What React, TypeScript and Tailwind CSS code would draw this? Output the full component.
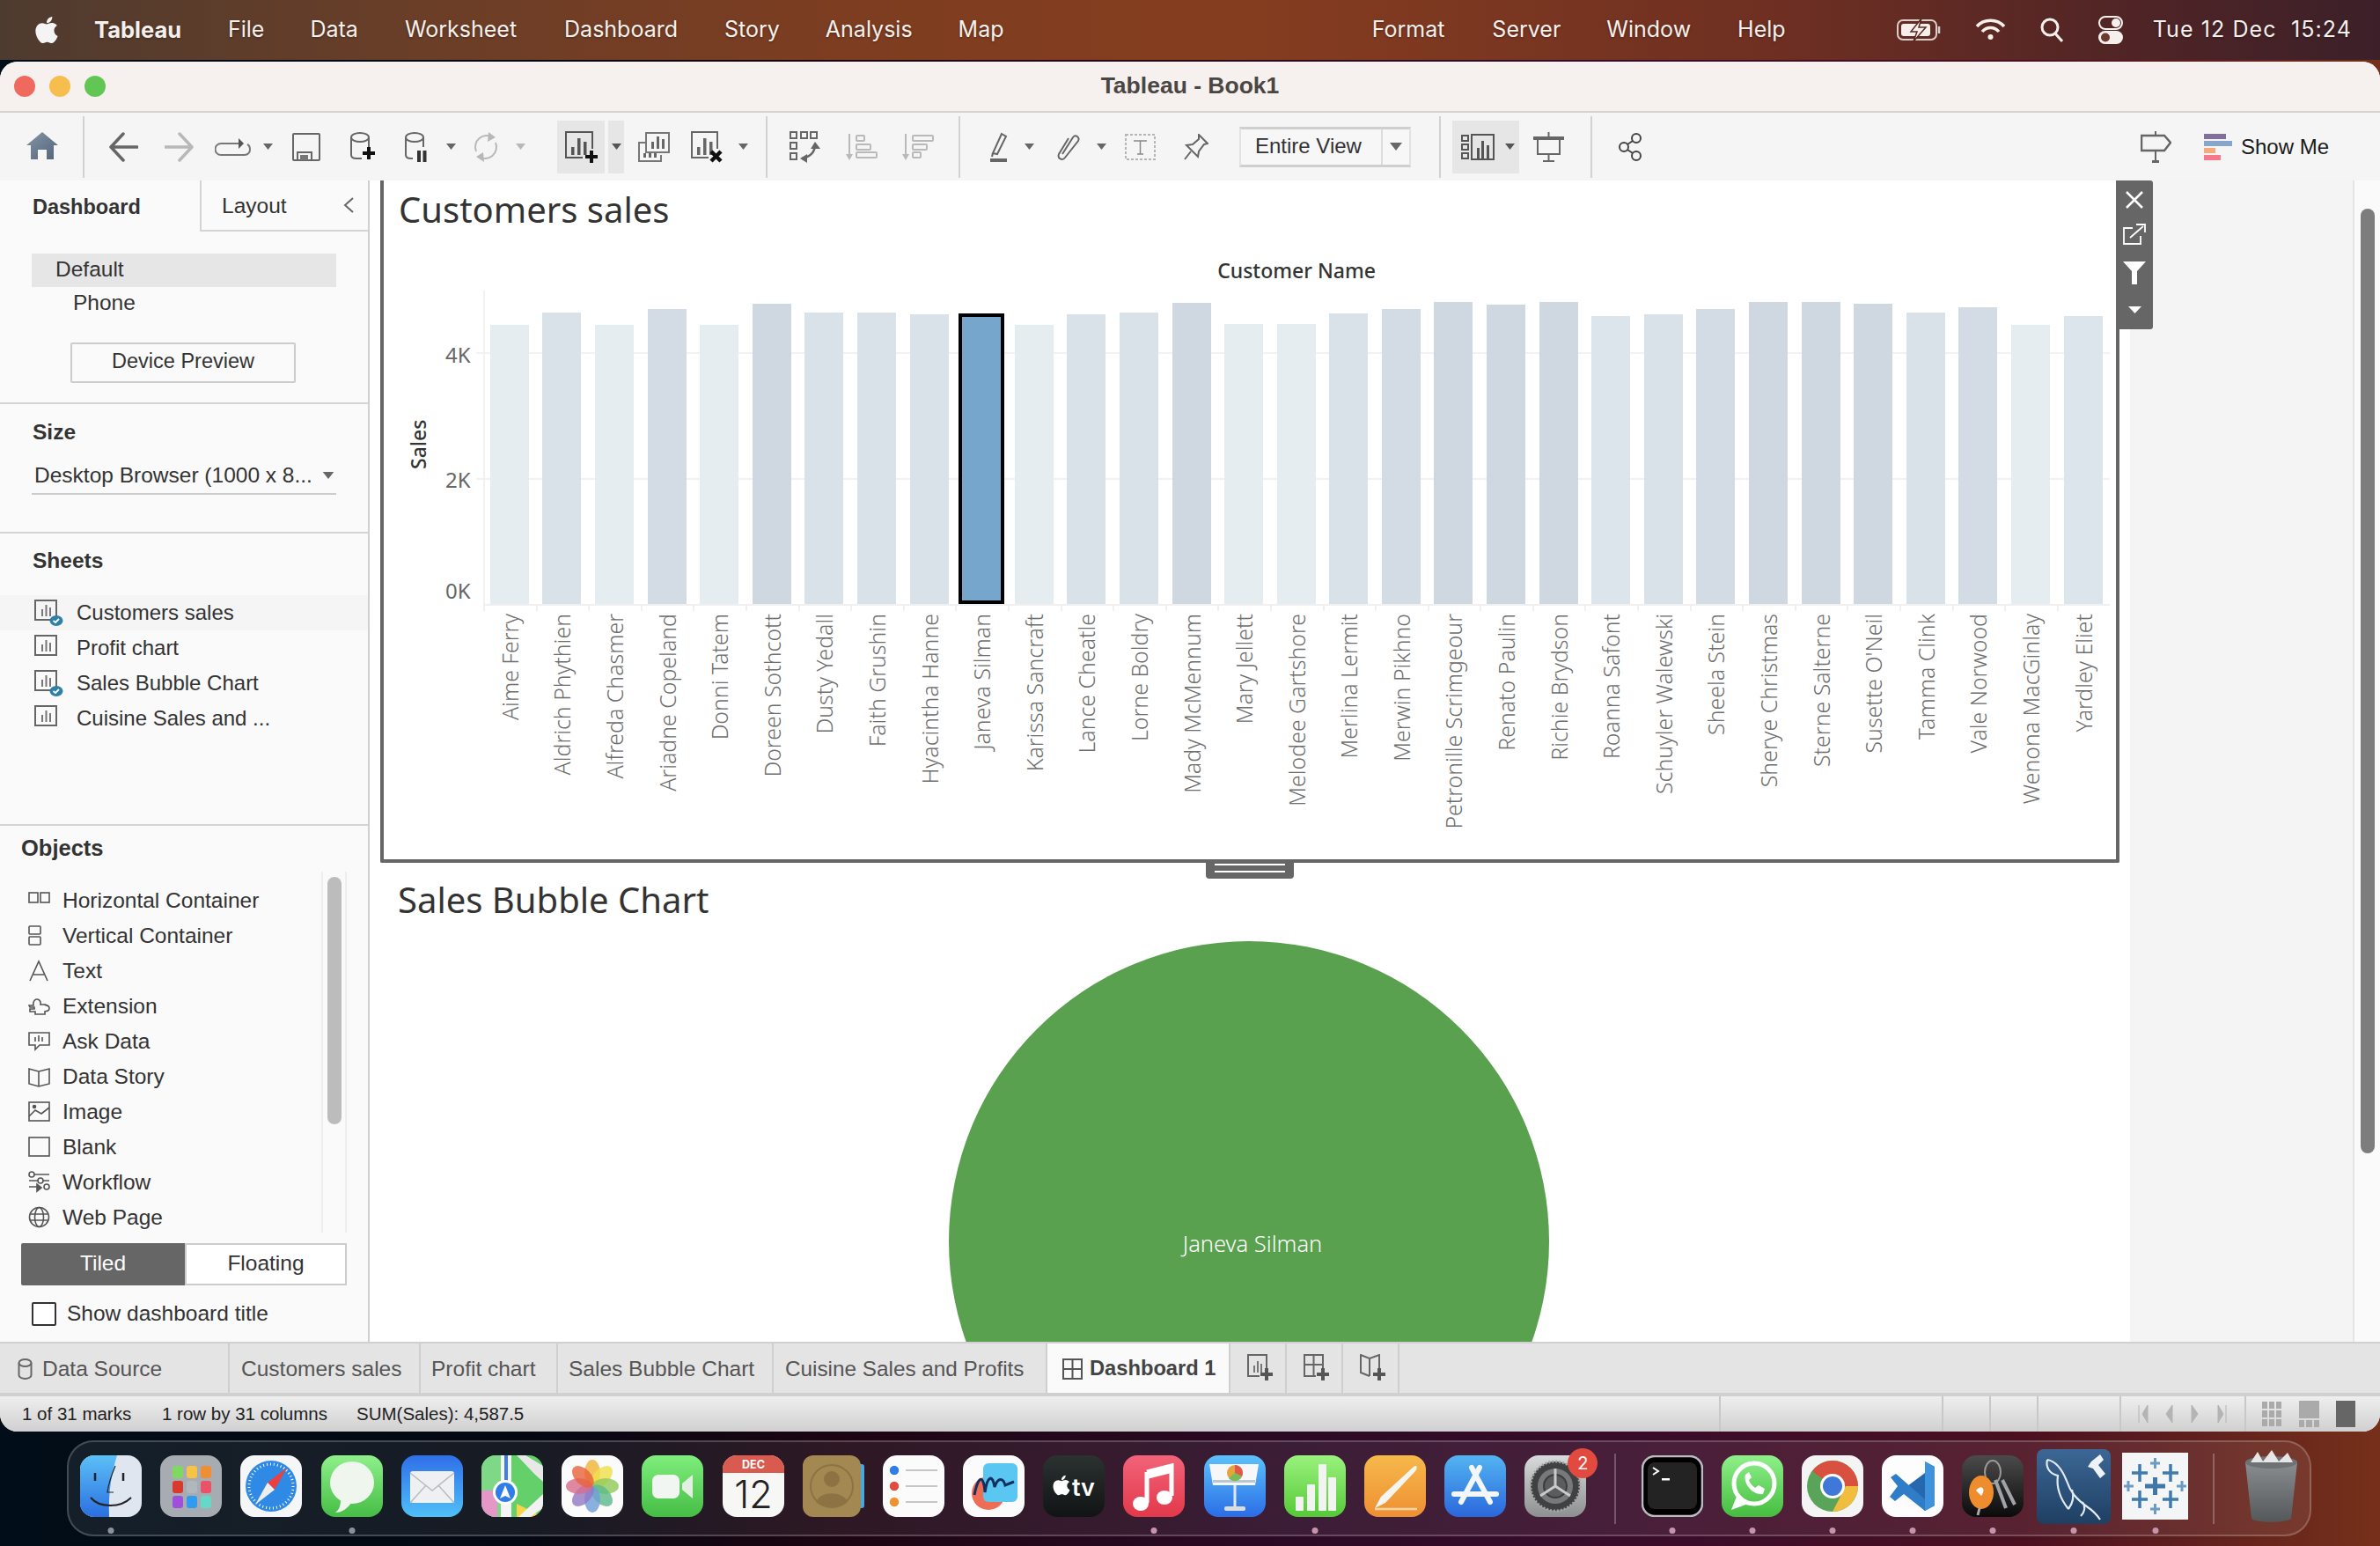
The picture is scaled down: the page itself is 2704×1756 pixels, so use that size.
import React from "react";

const sans = "font-['Liberation_Sans','Inter',sans-serif]";

const Caret = ({ cls, c = "#666" }: { cls: string; c?: string }) => (
  <svg width="11" height="7" viewBox="0 0 11 7" className={"shrink-0 " + cls}><path d="M0 0H11L5.5 7Z" fill={c} /></svg>
);
const Sep = ({ cls }: { cls: string }) => <div className={"w-[2px] h-[70px] bg-[#d2d2d2] shrink-0 " + cls} />;

const MiniChart = ({ c = "#666", off = 0 }: { c?: string; off?: number }) => (
  <g fill={c}>
    <rect x={7 + off} y="18" width="3.5" height="9" />
    <rect x={14 + off} y="8" width="3.5" height="19" />
    <rect x={21 + off} y="12" width="3.5" height="15" />
  </g>
);
const Plus = ({ x, y, c = "#111" }: { x: number; y: number; c?: string }) => (
  <path d={`M${x + 5} ${y}h4v5h5v4h-5v5h-4v-5h-5v-4h5z`} fill={c} />
);

function Toolbar() {
  return (
    <div className="h-[77px] bg-[#f5f5f5] flex items-center shrink-0">
      <svg width="36" height="32" viewBox="0 0 36 32" className="ml-[30px] shrink-0 mt-[-2px]">
        <defs><linearGradient id="hm" x1="0" y1="0" x2="1" y2="1"><stop offset="0" stopColor="#8795a6" /><stop offset="1" stopColor="#51647b" /></linearGradient></defs>
        <path d="M18 0L36 15H31V31H23V20H13V31H5V15H0Z" fill="url(#hm)" />
      </svg>
      <Sep cls="ml-[28px]" />
      <svg width="34" height="34" viewBox="0 0 34 34" className="ml-[27px] shrink-0" fill="none" stroke="#666" strokeWidth="3.5" strokeLinecap="round" strokeLinejoin="round"><path d="M33 17H3M17 2L3 17L17 32" /></svg>
      <svg width="34" height="34" viewBox="0 0 34 34" className="ml-[30px] shrink-0" fill="none" stroke="#b8b8b8" strokeWidth="3.5" strokeLinecap="round" strokeLinejoin="round"><path d="M1 17H31M17 2L31 17L17 32" /></svg>
      <svg width="41" height="20" viewBox="0 0 41 20" className="ml-[23px] shrink-0" fill="none"><path d="M28 6H7a6 6 0 0 0 0 13H34a6 6 0 0 0 6-6c0-3-1-5-3-6" stroke="#777" strokeWidth="2" /><path d="M27 0L33 6L27 12Z" fill="#555" /></svg>
      <Caret cls="ml-[14px]" />
      <svg width="32" height="32" viewBox="0 0 32 32" className="ml-[22px] shrink-0" fill="none"><rect x="1" y="1" width="30" height="30" rx="1" stroke="#666" strokeWidth="2" /><path d="M6 31V22H22V31" stroke="#666" strokeWidth="2" /><rect x="9" y="25" width="9" height="6" fill="#777" /></svg>
      <svg width="29" height="34" viewBox="0 0 29 34" className="ml-[34px] shrink-0" fill="none"><ellipse cx="11" cy="6" rx="10" ry="5" stroke="#666" strokeWidth="2" /><path d="M1 6V26c0 3 3 4 6 4H13M21 6V17" stroke="#666" strokeWidth="2" /><Plus x={14} y={17} /></svg>
      <svg width="25" height="34" viewBox="0 0 25 34" className="ml-[33px] shrink-0" fill="none"><ellipse cx="11" cy="6" rx="10" ry="5" stroke="#666" strokeWidth="2" /><path d="M1 6V26c0 3 3 4 6 4H9M21 6V17" stroke="#666" strokeWidth="2" /><rect x="14" y="21" width="4" height="13" fill="#333" /><rect x="20.5" y="21" width="4" height="13" fill="#333" /></svg>
      <Caret cls="ml-[22px]" />
      <svg width="36" height="34" viewBox="0 0 36 34" className="ml-[16px] shrink-0" fill="none" stroke="#b8b8b8" strokeWidth="2"><path d="M7 22A13 13 0 0 1 26 6M29 12A13 13 0 0 1 10 28" /><path d="M21 0L29 6L20 11Z M15 23L7 28L16 34Z" fill="#b8b8b8" stroke="none" /></svg>
      <Caret cls="ml-[16px]" c="#b8b8b8" />
      <div className="ml-[36px] w-[54px] h-[60px] bg-[#e6e6e6] flex items-center justify-center shrink-0">
        <svg width="37" height="36" viewBox="0 0 37 36" fill="none"><path d="M20 30H1V1H31V20" stroke="#555" strokeWidth="2" /><MiniChart c="#555" /><Plus x={23} y={22} /></svg>
      </div>
      <div className="ml-[4px] w-[18px] h-[60px] bg-[#e6e6e6] flex items-center justify-center shrink-0"><Caret cls="" c="#555" /></div>
      <svg width="36" height="34" viewBox="0 0 36 34" className="ml-[16px] shrink-0" fill="none"><path d="M9 12H1V33H26V26" stroke="#777" strokeWidth="2" /><rect x="9" y="1" width="26" height="22" stroke="#777" strokeWidth="2" fill="#f5f5f5" /><g fill="#666"><rect x="15" y="11" width="3" height="8" /><rect x="21" y="5" width="3" height="14" /><rect x="27" y="8" width="3" height="11" /><rect x="6" y="24" width="3" height="5" /><rect x="12" y="24" width="3" height="5" /><rect x="18" y="24" width="3" height="5" /></g></svg>
      <svg width="36" height="36" viewBox="0 0 36 36" className="ml-[24px] shrink-0" fill="none"><path d="M20 30H1V1H30V20" stroke="#666" strokeWidth="2" /><MiniChart c="#666" /><path d="M23 23L34 34M34 23L23 34" stroke="#111" strokeWidth="4.5" /></svg>
      <Caret cls="ml-[18px]" />
      <Sep cls="ml-[20px]" />
      <svg width="35" height="36" viewBox="0 0 35 36" className="ml-[25px] shrink-0" fill="none" stroke="#666" strokeWidth="2"><rect x="1" y="1" width="7" height="7" /><rect x="13" y="1" width="7" height="7" /><rect x="24" y="1" width="7" height="7" /><rect x="1" y="13" width="7" height="7" /><rect x="1" y="25" width="7" height="7" /><path d="M29 15c0 8-5 14-15 16" strokeWidth="2.5" /><path d="M29 12L35 20H24ZM12 31L20 26V36Z" fill="#666" stroke="none" /></svg>
      <svg width="36" height="30" viewBox="0 0 36 30" className="ml-[29px] shrink-0" fill="none" stroke="#b9b9b9" strokeWidth="2"><path d="M4 0V26" /><path d="M0 23H8L4 30Z" fill="#b9b9b9" stroke="none" /><rect x="12" y="2" width="9" height="6" rx="1" /><rect x="12" y="12" width="16" height="6" rx="1" /><rect x="12" y="21" width="23" height="6" rx="1" /></svg>
      <svg width="36" height="30" viewBox="0 0 36 30" className="ml-[28px] shrink-0" fill="none" stroke="#b9b9b9" strokeWidth="2"><path d="M4 0V26" /><path d="M0 23H8L4 30Z" fill="#b9b9b9" stroke="none" /><rect x="12" y="2" width="23" height="6" rx="1" /><rect x="12" y="12" width="16" height="6" rx="1" /><rect x="12" y="21" width="9" height="6" rx="1" /></svg>
      <Sep cls="ml-[28px]" />
      <svg width="20" height="34" viewBox="0 0 20 34" className="ml-[34px] shrink-0" fill="none"><path d="M13 2L18 5L8 25L3 24Z" stroke="#666" strokeWidth="2" /><path d="M3 24L2 28" stroke="#666" strokeWidth="2" /><rect x="0" y="30" width="19" height="4" fill="#666" /></svg>
      <Caret cls="ml-[19px]" />
      <svg width="30" height="32" viewBox="0 0 30 32" className="ml-[23px] shrink-0" fill="none" stroke="#666" strokeWidth="2"><path d="M9 24L21 5c3-4 8 0 6 4L12 28c-3 4-9 1-7-4L16 6" /></svg>
      <Caret cls="ml-[18px]" />
      <svg width="35" height="30" viewBox="0 0 35 30" className="ml-[21px] shrink-0" fill="none"><rect x="1" y="1" width="33" height="28" stroke="#b5b5b5" strokeWidth="2" strokeDasharray="3 2" /><path d="M10 8H25M17.5 8V23M14 23H21" stroke="#888" strokeWidth="1.5" /></svg>
      <svg width="28" height="30" viewBox="0 0 28 30" className="ml-[32px] shrink-0" fill="none" stroke="#666" strokeWidth="2"><path d="M17 1L27 11L23 12L17 20L16 26L3 13L10 12L17 6Z" /><path d="M8 20L1 29" /></svg>
      <div className={"ml-[35px] w-[195px] h-[46px] shrink-0 flex border-x-2 border-x-[#e2e2e2] border-y-[3px] border-y-[#cfcfcf] bg-[#f7f7f7] text-[#333] text-[24px] " + sans}>
        <div className="w-[159px] flex items-center pl-[16px] pb-[2px]">Entire View</div>
        <div className="flex-1 border-l-2 border-[#dcdcdc] flex items-center justify-center"><Caret cls="w-[14px] h-[9px]" /></div>
      </div>
      <Sep cls="ml-[32px]" />
      <div className="ml-[13px] w-[76px] h-[60px] bg-[#e6e6e6] flex items-center shrink-0">
        <svg width="38" height="30" viewBox="0 0 38 30" className="ml-[10px]" fill="none" stroke="#555" strokeWidth="2"><rect x="1" y="2" width="7" height="6" /><rect x="1" y="12" width="7" height="6" /><rect x="1" y="22" width="7" height="6" /><rect x="12" y="1" width="25" height="28" /><g fill="#555" stroke="none"><rect x="18" y="16" width="3" height="12" /><rect x="23" y="8" width="3" height="20" /><rect x="29" y="13" width="3" height="15" /></g></svg>
        <Caret cls="ml-[12px]" c="#555" />
      </div>
      <svg width="35" height="34" viewBox="0 0 35 34" className="ml-[16px] shrink-0" fill="none"><rect x="0" y="5" width="35" height="4" fill="#666" /><path d="M17.5 0V5M5 9V25H30V9M17.5 25V33M11 33H24" stroke="#666" strokeWidth="2" /></svg>
      <Sep cls="ml-[30px]" />
      <svg width="27" height="32" viewBox="0 0 27 32" className="ml-[30px] shrink-0" fill="none" stroke="#444" strokeWidth="2"><circle cx="20" cy="6" r="5" /><circle cx="20" cy="26" r="5" /><circle cx="6" cy="16" r="5" /><path d="M10 13L16 9M10 19L16 23" /></svg>
      <div className="flex-1" />
      <svg width="35" height="36" viewBox="0 0 35 36" className="shrink-0" fill="none"><path d="M17 0V5M17 22V34" stroke="#666" strokeWidth="2" /><path d="M1 5H27L34 13L27 22H1Z" stroke="#666" strokeWidth="2.5" /><rect x="13" y="33" width="8" height="3" fill="#666" /></svg>
      <div className="ml-[37px] w-[32px] flex flex-col gap-[2px] shrink-0">
        <div className="w-[25px] h-[6px] bg-[#83709a]" />
        <div className="w-[32px] h-[6px] bg-[#86a7cb]" />
        <div className="w-[13px] h-[6px] bg-[#f4aa7b]" />
        <div className="w-[19px] h-[6px] bg-[#f6788a]" />
      </div>
      <span className={"ml-[10px] mr-[58px] text-[24px] text-[#1a1a1a] w-[100px] whitespace-nowrap " + sans}>Show Me</span>
    </div>
  );
}

const SheetIcon = ({ check }: { check?: boolean }) => (
  <svg width="34" height="30" viewBox="0 0 34 30" className="shrink-0" fill="none">
    <rect x="1" y="1" width="24" height="22" stroke="#666" strokeWidth="2" />
    <g fill="#777"><rect x="8" y="11" width="2" height="8" /><rect x="12.5" y="6" width="2" height="13" /><rect x="17" y="9" width="2" height="10" /></g>
    {check && <g><ellipse cx="25" cy="24" rx="7.5" ry="6" fill="#2f7fa6" /><path d="M21.5 24l2.5 2 4-4" stroke="#fff" strokeWidth="1.8" /></g>}
  </svg>
);

const s = { stroke: "#555", strokeWidth: 1.6, fill: "none" };
const objects: [string, React.ReactNode][] = [
  ["Horizontal Container", <g {...s}><rect x="1" y="4" width="10" height="11" /><rect x="14" y="4" width="10" height="11" /></g>],
  ["Vertical Container", <g {...s}><rect x="1" y="2" width="13" height="9" rx="1" /><rect x="1" y="14" width="13" height="9" rx="1" /></g>],
  ["Text", <path d="M2 24L12 2L22 24M6 17H18" {...s} />],
  ["Extension", <path d="M1 12H6c-1-6 3-7 4-7s5 1 4 6h5c-1 1 5 0 5 4s-5 4-5 3v4H8v-3H2v-3h5v-2H2z" {...s} />],
  ["Ask Data", <g {...s}><path d="M1 3H24V17H13L8 22V17H1Z" /><path d="M8 8V13M12 6V13M16 8V13" /></g>],
  ["Data Story", <path d="M1 4L12 7L24 4V21L12 24L1 21ZM12 7V24" {...s} />],
  ["Image", <g {...s}><rect x="1" y="2" width="23" height="21" /><path d="M1 18L8 11L15 15L24 8" /><circle cx="7" cy="7" r="1.5" fill="#555" /></g>],
  ["Blank", <rect x="1" y="2" width="23" height="21" {...s} />],
  ["Workflow", <g {...s}><circle cx="4" cy="4" r="3" /><path d="M7 4H24M1 11H12M17 11H24M1 18H12" /><circle cx="14" cy="11" r="3" /><circle cx="21" cy="18" r="3" /><path d="M10 15L15 19L10 23Z" fill="#555" /></g>],
  ["Web Page", <g {...s}><circle cx="12.5" cy="12.5" r="11" /><ellipse cx="12.5" cy="12.5" rx="5" ry="11" /><path d="M2 9H23M2 16H23" /></g>],
];

function LeftPanel() {
  return (
    <div className={"w-[420px] shrink-0 bg-[#fafafa] border-r-2 border-[#d0d0d0] flex flex-col text-[#333] text-[24.5px] " + sans}>
      <div className="flex h-[58px] shrink-0">
        <div className="w-[227px] pl-[37px] pt-[13px] font-bold text-[23.5px]">Dashboard</div>
        <div className="flex-1 border-l-2 border-b-2 border-[#d4d4d4] flex items-center">
          <span className="ml-[23px] mt-[2px]">Layout</span>
          <svg width="12" height="18" viewBox="0 0 12 18" className="ml-[64px]" fill="none" stroke="#666" strokeWidth="2"><path d="M11 1L2 9L11 17" /></svg>
        </div>
      </div>
      <div className="h-[196px] shrink-0 border-b-2 border-[#d4d4d4] flex flex-col">
        <div className="ml-[36px] mr-[36px] mt-[25px] h-[38px] bg-[#e6e6e6] pl-[27px] flex items-center pb-[2px]">Default</div>
        <div className="ml-[83px] h-[38px] flex items-center pb-[1px]">Phone</div>
        <div className="ml-[80px] mt-[25px] w-[256px] h-[46px] border-2 border-[#ccc] rounded-[2px] flex items-center justify-center pb-[3px] text-[23.5px]">Device Preview</div>
      </div>
      <div className="h-[147px] shrink-0 border-b-2 border-[#d4d4d4] flex flex-col">
        <div className="ml-[37px] mt-[14px] font-bold">Size</div>
        <div className="ml-[36px] mr-[36px] mt-[14px] h-[38px] border-b-2 border-[#ccc] flex items-center pl-[3px] justify-between pb-[3px] text-[24.5px]">
          <span className="whitespace-nowrap">Desktop Browser (1000 x 8...</span>
          <Caret cls="mr-[2px] w-[14px] h-[8px]" />
        </div>
      </div>
      <div className="h-[332px] shrink-0 border-b-2 border-[#d4d4d4] flex flex-col">
        <div className="ml-[37px] mt-[13px] font-bold">Sheets</div>
        <div className="mt-[20px] flex flex-col text-[24px]">
          {[["Customers sales", true, true], ["Profit chart", false, false], ["Sales Bubble Chart", true, false], ["Cuisine Sales and ...", false, false]].map(([n, c, h]) => (
            <div key={n as string} className={"h-[40px] flex items-center pl-[39px] gap-[14px] " + (h ? "bg-[#f5f5f5]" : "")}>
              <SheetIcon check={c as boolean} />
              <span className="whitespace-nowrap">{n as string}</span>
            </div>
          ))}
        </div>
      </div>
      <div className="flex-1 relative flex flex-col">
        <div className="ml-[24px] mt-[6px] font-bold text-[25.5px]">Objects</div>
        <div className="mt-[8px] h-[410px] flex">
          <div className="w-[365px] flex flex-col pt-[13px]">
            {objects.map(([n, ic]) => (
              <div key={n} className="h-[40px] flex items-center pl-[32px] gap-[14px] shrink-0">
                <svg width="25" height="26" viewBox="0 0 25 26" className="shrink-0">{ic}</svg>
                <span className="whitespace-nowrap">{n}</span>
              </div>
            ))}
          </div>
          <div className="w-[29px] border-x-2 border-[#eee] pt-[6px] flex justify-center">
            <div className="w-[16px] h-[281px] rounded-full bg-[#bcbcbc]" />
          </div>
        </div>
        <div className="ml-[24px] mt-[12px] w-[370px] h-[48px] flex">
          <div className="w-[186px] bg-[#666] text-white flex items-center justify-center rounded-l-[2px] pb-[1px]">Tiled</div>
          <div className="flex-1 border-2 border-[#ccc] bg-white flex items-center justify-center pb-[1px]">Floating</div>
        </div>
        <div className="ml-[36px] mt-[14px] flex items-center gap-[12px]">
          <div className="w-[28px] h-[27px] border-2 border-[#333] rounded-[2px] bg-white" />
          <span>Show dashboard title</span>
        </div>
      </div>
    </div>
  );
}

const customers: [string, number][] = [
  ["Aime Ferry", 370], ["Aldrich Phythien", 356], ["Alfreda Chasmer", 370], ["Ariadne Copeland", 352], ["Donni Tatem", 370],
  ["Doreen Sothcott", 346], ["Dusty Yedall", 356], ["Faith Grushin", 356], ["Hyacintha Hanne", 358], ["Janeva Silman", 357],
  ["Karissa Sancraft", 370], ["Lance Cheatle", 358], ["Lorne Boldry", 356], ["Mady McMennum", 345], ["Mary Jellett", 369],
  ["Melodee Gartshore", 369], ["Merlina Lermit", 357], ["Merwin Pikhno", 352], ["Petronille Scrimgeour", 344], ["Renato Paulin", 347],
  ["Richie Brydson", 344], ["Roanna Safont", 360], ["Schuyler Walewski", 358], ["Sheela Stein", 352], ["Sherye Christmas", 344],
  ["Sterne Salterne", 344], ["Susette O'Neil", 346], ["Tamma Clink", 356], ["Vale Norwood", 350], ["Wenona MacGinlay", 370], ["Yardley Eliet", 360],
];
const barColor = (t: number) => (t <= 348 ? "bg-[#cfd7e1]" : t <= 353 ? "bg-[#d3dbe4]" : t <= 358 ? "bg-[#d9e1e9]" : t <= 362 ? "bg-[#dde5ec]" : "bg-[#e6edf0]");

function BarChart() {
  return (
    <div className="relative z-20 w-[1976px] h-[775px] shrink-0 border-x-4 border-b-4 border-[#666] flex flex-col font-['Noto_Sans',sans-serif] rounded-b-[2px]">
      <div className="h-[66px] pl-[17px] flex items-center text-[40px] text-[#333] shrink-0">Customers sales</div>
      <div className="h-[59px] shrink-0 pt-[20px] text-center text-[23px] font-medium text-[#333] pl-[106px] leading-[32px]">Customer Name</div>
      <div className="relative ml-[113px] w-[1848px] h-[358px] shrink-0 border-b-2 border-[#f0f0f0] flex items-end">
        <div className="absolute left-0 top-[0px] bottom-0 w-[2px] bg-[#f2f2f2]" />
        <div className="absolute left-[-8px] right-0 top-[70px] h-[2px] bg-[#f2f2f2]" />
        <div className="absolute left-[-8px] right-0 top-[213px] h-[2px] bg-[#f2f2f2]" />
        <div className="absolute left-[-43px] top-[58px] text-[24px] leading-[30px] text-[#666]">4K</div>
        <div className="absolute left-[-43px] top-[200px] text-[24px] leading-[30px] text-[#666]">2K</div>
        <div className="absolute left-[-43px] top-[326px] text-[24px] leading-[30px] text-[#666]">0K</div>
        <div className="absolute left-[-88px] top-[133px] h-[84px] text-[23px] leading-[28px] font-medium text-[#333] [writing-mode:vertical-rl] rotate-180 text-center">Sales</div>
        {customers.map(([n, t]) => (
          <div key={n} className="relative w-[59.6px] shrink-0 flex justify-center">
            {n === "Janeva Silman" ? (
              <div className="w-[52px] border-4 border-black bg-[#76a6cc]" style={{ height: 687 - t }} />
            ) : (
              <div className={"w-[44px] " + barColor(t)} style={{ height: 687 - t }} />
            )}
          </div>
        ))}
      </div>
      <div className="ml-[113px] w-[1848px] h-[6px] flex shrink-0">
        {customers.map(([n]) => <div key={n} className="w-[59.6px] shrink-0 border-l-2 border-[#f0f0f0]" />)}
      </div>
      <div className="ml-[113px] w-[1848px] mt-[3px] flex">
        {customers.map(([n]) => (
          <div key={n} className="w-[59.6px] shrink-0 flex justify-center">
            <span className="self-start [writing-mode:vertical-rl] rotate-180 text-[24.9px] font-light text-[#6e6e6e] leading-[28px] whitespace-nowrap">{n}</span>
          </div>
        ))}
      </div>
      <div className="absolute left-[1968px] top-0 w-[42px] h-[169px] bg-[#666] rounded-r-[3px] rounded-bl-[3px] flex flex-col items-center text-white">
        <svg width="22" height="22" viewBox="0 0 22 22" className="mt-[11px] shrink-0" fill="none" stroke="#fff" strokeWidth="2.5"><path d="M2 2L20 20M20 2L2 20" /></svg>
        <svg width="26" height="24" viewBox="0 0 26 24" className="mt-[16px] shrink-0" fill="none" stroke="#fff" strokeWidth="1.8"><path d="M11 5H1V23H20V14" /><path d="M8 16L23 3M15 1H25V10" /></svg>
        <svg width="26" height="26" viewBox="0 0 26 26" className="mt-[19px] shrink-0"><path d="M0 0H26L16 11V26H10V11Z" fill="#fff" /></svg>
        <svg width="15" height="8" viewBox="0 0 15 8" className="mt-[25px] shrink-0"><path d="M0 0H15L7.5 8Z" fill="#fff" /></svg>
      </div>
      <div className="absolute left-[934px] top-[771px] w-[100px] h-[22px] bg-[#666] rounded-b-[4px] flex flex-col items-center gap-[6px] pt-[5px] z-10">
        <div className="w-[80px] h-[2px] bg-white" />
        <div className="w-[80px] h-[2px] bg-white" />
      </div>
    </div>
  );
}

function Canvas() {
  return (
    <div className="w-[2000px] shrink-0 bg-white flex flex-col">
      <div className="pl-[12px]"><BarChart /></div>
      <div className="h-[84px] pl-[32px] flex items-center text-[40px] text-[#333] font-['Noto_Sans',sans-serif] shrink-0">Sales Bubble Chart</div>
      <div className="flex-1 min-h-0 overflow-hidden">
        <div className="ml-[658px] mt-[5px] w-[682px] h-[682px] rounded-full bg-[#59a14f] flex items-center justify-center text-white text-[25.5px] font-light font-['Noto_Sans',sans-serif] pl-[8px] pt-[5px]">Janeva Silman</div>
      </div>
    </div>
  );
}

function Tabs() {
  const tab = "h-full border-r-2 border-[#cfcfcf] flex items-center shrink-0 text-[#555] whitespace-nowrap";
  return (
    <div className={"h-[62px] shrink-0 bg-[#e4e4e4] border-t-2 border-b-[4px] border-[#d0d0d0] flex text-[24.5px] " + sans}>
      <div className={tab + " w-[261px] pl-[20px] gap-[11px] pt-[2px]"}>
        <svg width="17" height="24" viewBox="0 0 17 24" fill="none" stroke="#666" strokeWidth="2"><ellipse cx="8.5" cy="5" rx="7" ry="4" /><path d="M1.5 5V19c0 2 3 4 7 4s7-2 7-4V5" /></svg>
        Data Source
      </div>
      <div className={tab + " w-[217px] pl-[13px] pt-[2px]"}>Customers sales</div>
      <div className={tab + " w-[156px] pl-[12px] pt-[2px]"}>Profit chart</div>
      <div className={tab + " w-[245px] pl-[12px] pt-[2px]"}>Sales Bubble Chart</div>
      <div className={tab + " w-[311px] pl-[13px] pt-[2px] text-[24.3px]"}>Cuisine Sales and Profits</div>
      <div className="h-full w-[208px] bg-[#fafafa] border-r-2 border-[#cfcfcf] flex items-center pl-[17px] pt-[2px] gap-[8px] font-bold text-[#444] shrink-0 text-[23.7px]">
        <svg width="23" height="24" viewBox="0 0 23 24" fill="none" stroke="#555" strokeWidth="2"><rect x="1" y="1" width="21" height="22" /><path d="M11.5 1V23M1 12H22" /></svg>
        Dashboard 1
      </div>
      <div className={tab + " w-[64px] justify-center pl-[6px]"}>
        <svg width="30" height="32" viewBox="0 0 30 32" fill="none"><path d="M14 25H1V1H22V16" stroke="#666" strokeWidth="2" /><g fill="#777"><rect x="7" y="13" width="2" height="8" /><rect x="11" y="8" width="2" height="13" /><rect x="15" y="11" width="2" height="10" /></g><Plus x={15} y={16} c="#555" /></svg>
      </div>
      <div className={tab + " w-[64px] justify-center pl-[6px]"}>
        <svg width="30" height="32" viewBox="0 0 30 32" fill="none"><path d="M14 25H1V1H22V16M11.5 1V25M1 12H22" stroke="#666" strokeWidth="2" /><Plus x={15} y={16} c="#555" /></svg>
      </div>
      <div className={tab + " w-[64px] justify-center pl-[6px]"}>
        <svg width="30" height="32" viewBox="0 0 30 32" fill="none"><path d="M11 25L1 21V1L11 5L22 1V16M11 5V25" stroke="#666" strokeWidth="2" /><Plus x={15} y={16} c="#555" /></svg>
      </div>
    </div>
  );
}

function StatusBar() {
  const cell = "h-full border-l-2 border-[#c8c8c8] shrink-0";
  return (
    <div className={"h-[40px] shrink-0 bg-gradient-to-b from-[#efefef] to-[#d0d0d0] flex items-center text-[20.5px] text-[#222] " + sans}>
      <span className="ml-[25px] w-[159px] whitespace-nowrap">1 of 31 marks</span>
      <span className="w-[221px] whitespace-nowrap">1 row by 31 columns</span>
      <span className="w-[1548px] whitespace-nowrap">SUM(Sales): 4,587.5</span>
      <div className={cell + " w-[253px]"} />
      <div className={cell + " w-[54px]"} />
      <div className={cell + " w-[54px]"} />
      <div className={cell + " w-[94px]"} />
      <div className={cell + " w-[142px] flex items-center pl-[18px] gap-[17px]"}>
        {["M2 2V22M12 2L6 12L12 22Z", "M10 2L3 12L10 22Z", "M2 2L9 12L2 22Z", "M2 2L8 12L2 22ZM11 2V22"].map((d) => (
          <svg key={d} width="13" height="24" viewBox="0 0 13 24" fill="#b4b4b4" stroke="#b4b4b4" strokeWidth="1"><path d={d} /></svg>
        ))}
      </div>
      <div className={cell + " flex-1 flex items-center pl-[18px]"}>
        <div className="grid grid-cols-3 gap-[2px] w-[22px]">{Array.from({ length: 9 }).map((_, i) => <div key={i} className="h-[8px] bg-[#aaa]" />)}</div>
        <div className="ml-[20px] w-[23px] flex flex-col gap-[2px]">
          <div className="h-[20px] bg-[#aaa]" />
          <div className="grid grid-cols-3 gap-[2px]">{[0, 1, 2].map((i) => <div key={i} className="h-[8px] bg-[#aaa]" />)}</div>
        </div>
        <div className="ml-[19px] w-[22px] h-[30px] bg-[#666]" />
      </div>
    </div>
  );
}

const appleD = "M17.05 20.28c-.98.95-2.05.8-3.08.35-1.09-.46-2.09-.48-3.24 0-1.44.62-2.2.44-3.06-.35C2.79 15.25 3.51 7.59 9.05 7.31c1.35.07 2.29.74 3.08.8 1.18-.24 2.31-.93 3.57-.84 1.51.12 2.65.72 3.4 1.8-3.12 1.87-2.38 5.98.48 7.13-.57 1.5-1.31 2.99-2.54 4.09zM12.03 7.25c-.15-2.23 1.66-4.07 3.74-4.25.29 2.58-2.34 4.5-3.74 4.25z";

const G = ({ id, a, b }: { id: string; a: string; b: string }) => (
  <defs><linearGradient id={id} x1="0" y1="0" x2="0" y2="1"><stop offset="0" stopColor={a} /><stop offset="1" stopColor={b} /></linearGradient></defs>
);
const Base = ({ fill }: { fill: string }) => <rect x="0" y="0" width="70" height="70" rx="16" fill={fill} />;
const Ic = ({ children }: { children: React.ReactNode }) => <svg width="70" height="70" viewBox="0 0 70 70">{children}</svg>;

const dockApps: { k: string; cell: string; dot?: boolean; node: React.ReactNode }[] = [
  { k: "finder", cell: "w-[70px] mr-[21.2px]", dot: true, node: <Ic><clipPath id="fc"><rect width="70" height="70" rx="16" /></clipPath><g clipPath="url(#fc)"><G id="f1" a="#5cc0f7" b="#2a6fe0" /><rect width="70" height="70" fill="#dfe6f0" /><path d="M0 0H42C36 20 32 40 33 70H0Z" fill="url(#f1)" /></g><path d="M17 20V29M49 20V29" stroke="#222" strokeWidth="2.5" /><path d="M12 48C22 60 46 60 58 48" stroke="#222" strokeWidth="2" fill="none" /><path d="M40 12C35 24 32 34 31 42H38" stroke="#222" strokeWidth="1.2" fill="none" /></Ic> },
  { k: "launch", cell: "w-[70px] mr-[21.2px]", node: <Ic><Base fill="#a7abb2" />{[["#7fd860", "#f6c344", "#ef8f34"], ["#d83a2e", "#b0b8bd", "#e8536a"], ["#a04fdc", "#2f9cf0", "#66d8c8"]].map((row, r) => row.map((c, i) => <rect key={c} x={14 + i * 16} y={12 + r * 17} width="12" height="14" rx="3" fill={c} />))}</Ic> },
  { k: "safari", cell: "w-[70px] mr-[21.2px]", node: <Ic><Base fill="#f5f6f8" /><circle cx="35" cy="35" r="29" fill="#2f8ae6" /><circle cx="35" cy="35" r="25" fill="none" stroke="#fff" strokeWidth="3" strokeDasharray="1 3" /><path d="M53 14L39 39L31 31Z" fill="#ee3f3f" /><path d="M17 56L31 31L39 39Z" fill="#eee" /></Ic> },
  { k: "msg", cell: "w-[70px] mr-[21.2px]", dot: true, node: <Ic><G id="m1" a="#8ff08a" b="#45bd45" /><Base fill="url(#m1)" /><ellipse cx="35" cy="31" rx="25" ry="24" fill="#eef6ee" /><path d="M22 50C22 58 20 62 16 65C24 65 30 60 34 54Z" fill="#eef6ee" /></Ic> },
  { k: "mail", cell: "w-[70px] mr-[21.2px]", node: <Ic><G id="ma" a="#2f6fe8" b="#4fc0f8" /><Base fill="url(#ma)" /><rect x="10" y="18" width="50" height="36" rx="3" fill="#eef0f2" /><path d="M10 20L35 40L60 20M10 54L28 34M60 54L42 34" stroke="#b8bcc2" strokeWidth="1.5" fill="none" /></Ic> },
  { k: "maps", cell: "w-[70px] mr-[21.2px]", node: <Ic><clipPath id="mc"><rect width="70" height="70" rx="16" /></clipPath><g clipPath="url(#mc)"><rect width="70" height="70" fill="#63d06a" /><path d="M0 0H22V70H0Z" fill="#7fd887" /><path d="M0 40H18V70H0Z" fill="#e597c8" /><path d="M40 55L70 70H40Z" fill="#f7d54a" /><path d="M22 0H34V70H22Z" fill="#f5f5f5" /><path d="M40 0C50 10 60 22 70 30V12L50 0Z" fill="#e8e8e8" /><path d="M26 0H30V32H26Z" fill="#3f7de8" /><path d="M42 70L70 44V60L55 70Z" fill="#f2f2f2" /></g><circle cx="27" cy="42" r="14" fill="#fff" /><circle cx="27" cy="42" r="11" fill="#2f7de8" /><path d="M27 34L33 49L27 46L21 49Z" fill="#fff" /></Ic> },
  { k: "photos", cell: "w-[70px] mr-[21.2px]", node: <Ic><Base fill="#fbfbfb" />{["#f3b33a", "#f0e04b", "#8fca56", "#5cb88c", "#6e9ed8", "#9277c4", "#d86b8c", "#e8613b"].map((c, i) => <ellipse key={c} cx="35" cy="20" rx="9" ry="15" fill={c} opacity="0.8" transform={`rotate(${i * 45} 35 35)`} />)}</Ic> },
  { k: "ft", cell: "w-[70px] mr-[21.2px]", node: <Ic><G id="ft1" a="#7fee7c" b="#45bd45" /><Base fill="url(#ft1)" /><rect x="12" y="22" width="31" height="27" rx="7" fill="#f2f6f2" /><path d="M46 32L58 22V49L46 39Z" fill="#e3efe3" /></Ic> },
  { k: "cal", cell: "w-[70px] mr-[21.2px]", node: <Ic><Base fill="#f7f7f5" /><path d="M0 16A16 16 0 0 1 16 0H54A16 16 0 0 1 70 16V20H0Z" fill="#d95a4f" /><text x="35" y="15" textAnchor="middle" fontSize="12.5" fontWeight="700" fill="#fff" fontFamily="Inter">DEC</text><text x="35" y="60" textAnchor="middle" fontSize="43" fontWeight="300" fill="#222" fontFamily="Inter">12</text></Ic> },
  { k: "contacts", cell: "w-[70px] mr-[21.2px]", node: <Ic><rect x="62" y="10" width="8" height="50" rx="3" fill="#4aa6dd" /><rect x="0" y="0" width="66" height="70" rx="12" fill="#a48852" /><circle cx="33" cy="35" r="24" fill="none" stroke="#8d7343" strokeWidth="2" /><circle cx="33" cy="27" r="9" fill="#8d7343" /><path d="M15 53C20 40 46 40 51 53C44 60 22 60 15 53Z" fill="#8d7343" /></Ic> },
  { k: "rem", cell: "w-[70px] mr-[21.2px]", node: <Ic><Base fill="#fbfbfb" /><circle cx="13" cy="17" r="6" fill="#2f7de8" stroke="#fff" strokeWidth="1.5" /><circle cx="13" cy="35" r="6" fill="#e34c3c" stroke="#fff" strokeWidth="1.5" /><circle cx="13" cy="53" r="6" fill="#ee9132" stroke="#fff" strokeWidth="1.5" /><path d="M26 17H62M26 35H62M26 53H62" stroke="#b5b5b5" strokeWidth="1.5" /></Ic> },
  { k: "free", cell: "w-[70px] mr-[21.2px]", node: <Ic><Base fill="#fbfbfb" /><circle cx="29" cy="43" r="19" fill="#ee6e55" /><rect x="23" y="9" width="39" height="44" rx="6" fill="#5ac6f2" /><path d="M13 45C18 20 24 24 25 42C28 22 34 22 36 36C40 24 46 26 48 34L58 30" stroke="#12305e" strokeWidth="3" fill="none" /></Ic> },
  { k: "tv", cell: "w-[70px] mr-[21.2px]", node: <Ic><G id="t1" a="#2b3230" b="#101414" /><Base fill="url(#t1)" /><g transform="translate(6 19) scale(1.25)" fill="#fff"><path d={appleD} /></g><text x="33" y="46" fontSize="27" fontWeight="600" fill="#fff" fontFamily="Inter">tv</text></Ic> },
  { k: "music", cell: "w-[70px] mr-[21.2px]", dot: true, node: <Ic><G id="mu" a="#f2637a" b="#e2394a" /><Base fill="url(#mu)" /><path d="M27 19L55 12V46" stroke="#fff" strokeWidth="5" fill="none" /><path d="M27 19V54" stroke="#fff" strokeWidth="5" /><ellipse cx="20" cy="55" rx="9" ry="8" fill="#fff" /><ellipse cx="47" cy="48" rx="9" ry="8" fill="#fff" /><path d="M27 17L55 10V20L27 27Z" fill="#fff" /></Ic> },
  { k: "key", cell: "w-[70px] mr-[21.2px]", node: <Ic><G id="k1" a="#5cc2fb" b="#2a6de6" /><Base fill="url(#k1)" /><path d="M6 10H62L58 34H10Z" fill="#f7f7f7" /><rect x="10" y="28" width="48" height="3" fill="#b9c6d4" /><circle cx="35" cy="20" r="9" fill="#e8a33d" /><path d="M35 20V11A9 9 0 0 1 43 24Z" fill="#e2574c" /><path d="M35 20L43 24A9 9 0 0 1 28 26Z" fill="#79bb57" /><path d="M35 34V60" stroke="#e3e7ea" strokeWidth="3" /><rect x="23" y="58" width="24" height="5" rx="2" fill="#d8dde2" /></Ic> },
  { k: "num", cell: "w-[70px] mr-[21.2px]", dot: true, node: <Ic><G id="n1" a="#9af27c" b="#55c938" /><Base fill="url(#n1)" /><g fill="#f2f4f2"><rect x="13" y="47" width="9" height="16" rx="1" /><rect x="26" y="33" width="9" height="30" rx="1" /><rect x="39" y="10" width="9" height="53" rx="1" /><rect x="50" y="25" width="9" height="38" rx="1" /></g></Ic> },
  { k: "pages", cell: "w-[70px] mr-[21.2px]", node: <Ic><G id="p1" a="#f6b94a" b="#ef8f33" /><Base fill="url(#p1)" /><path d="M56 13C60 10 61 14 58 18L24 54L12 60L19 47Z" fill="#f7f5f0" /><path d="M12 61H60" stroke="#f7d7a6" strokeWidth="2.5" /></Ic> },
  { k: "store", cell: "w-[70px] mr-[21.2px]", node: <Ic><G id="a1" a="#53b4f2" b="#2a67db" /><Base fill="url(#a1)" /><g stroke="#f3f7fb" strokeWidth="6" strokeLinecap="round"><path d="M31 14L52 53M40 14L19 53" /><path d="M11 44H59" /></g></Ic> },
  { k: "settings", cell: "w-[70px]", node: <Ic><G id="s1" a="#d8dadb" b="#8d8f90" /><Base fill="url(#s1)" /><circle cx="35" cy="35" r="28" fill="#3f4142" /><circle cx="35" cy="35" r="28" fill="none" stroke="#a3a5a6" strokeWidth="3" strokeDasharray="2 2" /><circle cx="35" cy="35" r="20" fill="#77797a" /><circle cx="35" cy="35" r="13" fill="#5a5c5d" stroke="#3a3c3d" strokeWidth="2" /><path d="M35 35V15M35 35L18 46M35 35L52 46" stroke="#c8cacb" strokeWidth="3" /></Ic> },
  { k: "sep1", cell: "ml-[32px] mr-[29px]", node: null },
  { k: "term", cell: "w-[70px] mr-[21px]", dot: true, node: <Ic><rect x="1" y="1" width="68" height="68" rx="14" fill="#000" stroke="#b9bcc0" strokeWidth="2.5" /><rect x="7" y="8" width="56" height="53" rx="8" fill="#232323" /><path d="M13 14L19 18L13 22" stroke="#fff" strokeWidth="2" fill="none" /><rect x="23" y="26" width="9" height="2.5" fill="#fff" /></Ic> },
  { k: "wa", cell: "w-[70px] mr-[21px]", dot: true, node: <Ic><G id="w1" a="#8ff08a" b="#45bd40" /><Base fill="url(#w1)" /><circle cx="37" cy="32" r="23" fill="none" stroke="#fff" strokeWidth="5" /><path d="M18 44L11 62L30 55Z" fill="#fff" /><path d="M27 22C24 32 36 46 47 44L49 38L42 34L38 37C34 34 32 31 31 28L34 25L31 19Z" fill="#fff" /></Ic> },
  { k: "chrome", cell: "w-[70px] mr-[21px]", dot: true, node: <Ic><Base fill="#f4f4f4" /><circle cx="35" cy="35" r="29" fill="#5aa45a" /><path d="M35 6A29 29 0 0 1 64 35H35L12 18A29 29 0 0 1 35 6Z" fill="#d95040" /><path d="M64 35A29 29 0 0 1 35 64L50 35Z" fill="#f1bd3e" /><circle cx="35" cy="35" r="14" fill="#fff" /><circle cx="35" cy="35" r="11" fill="#3f78d8" /></Ic> },
  { k: "vs", cell: "w-[70px] mr-[21px]", dot: true, node: <Ic><Base fill="#fdfdfd" /><path d="M49 7L60 13V57L49 63L25 38L49 20Z" fill="#2668b0" /><path d="M49 7L60 13V57L49 63Z" fill="#3f93dc" /><path d="M10 25L16 21L49 50V63L25 44L15 52L9 47L18 35Z" fill="#2f7cc7" /></Ic> },
  { k: "keychain", cell: "w-[70px]", dot: true, node: <Ic><G id="kc" a="#4b4b4b" b="#0b0b0b" /><Base fill="url(#kc)" /><ellipse cx="35" cy="19" rx="9" ry="13" fill="none" stroke="#9a9a9a" strokeWidth="2" /><path d="M38 28L50 60M46 28L60 56" stroke="#9ea4a8" strokeWidth="4" /><ellipse cx="22" cy="42" rx="14" ry="19" fill="#ee8c2e" /><path d="M16 40C22 32 28 38 22 46Z" fill="#fff" /><path d="M20 60L18 68" stroke="#aaa" strokeWidth="3" /></Ic> },
  { k: "mysql", cell: "w-[84px] ml-[15px]", dot: true, node: <svg width="84" height="85" viewBox="0 0 84 85" className="shrink-0"><G id="my" a="#3c6795" b="#1f3f62" /><rect width="84" height="85" rx="8" fill="url(#my)" /><path d="M12 12C24 14 30 26 34 36C38 48 44 56 58 66C64 70 68 74 72 80M12 12C10 20 14 28 24 30C22 44 28 58 36 68M36 68C42 60 42 52 40 46M52 60C56 66 54 72 50 76" stroke="#e2ebf3" strokeWidth="2.2" fill="none" /><path d="M62 14L72 6L76 12L70 18L78 28L72 33L64 22L58 20Z" fill="#eef3f8" /></svg> },
  { k: "tableau", cell: "w-[75px] ml-[13px]", dot: true, node: <svg width="75" height="76" viewBox="0 0 75 76" className="shrink-0"><rect width="75" height="76" fill="#f3f5f6" /><g fill="none" strokeWidth="3"><path d="M37.5 28V48M26 38H49" stroke="#4177a8" strokeWidth="5" /><path d="M37.5 6V18M32 12H43M37.5 58V70M32 64H43" stroke="#6f9bc2" /><path d="M20 13V33M11 23H29M55 13V33M46 23H64M20 43V63M11 53H29M55 43V63M46 53H64" stroke="#3f7bae" strokeWidth="3.5" /><path d="M7 32V44M2 38H13M68 32V44M62 38H73" stroke="#6f9bc2" /></g></svg> },
  { k: "sep2", cell: "ml-[28px] mr-[33px]", node: null },
  { k: "trash", cell: "w-[63px]", node: <svg width="63" height="82" viewBox="0 0 63 82" className="shrink-0"><G id="tr" a="#8a8d90" b="#55585a" /><path d="M2 14H61L54 78C46 83 16 83 9 78Z" fill="url(#tr)" /><ellipse cx="31.5" cy="14" rx="29.5" ry="7" fill="#6f7275" /><path d="M8 14L16 2L22 13L32 0L40 13L50 3L56 14Z" fill="#e6e6e6" /></svg> },
];

function Dock() {
  return (
    <div className="ml-[76px] mt-[10px] w-[2550px] h-[109px] rounded-[30px] border-2 border-[#ffffff33] bg-[#ffffff14] flex items-center pl-[13px] shrink-0">
      {dockApps.map((a) => {
        if (a.node === null) return <div key={a.k} className={"w-[2px] h-[80px] bg-[#ffffff40] shrink-0 " + a.cell} />;
        return (
          <div key={a.k} className={"relative shrink-0 h-[70px] flex items-center justify-center mt-[-5px] " + a.cell}>
            {a.node}
            {a.k === "settings" && <div className="absolute right-[-13px] top-[-8px] w-[34px] h-[34px] rounded-full bg-[#e2493f] text-white text-[20px] flex items-center justify-center font-['Inter',sans-serif]">2</div>}
            {a.dot && <div className={"absolute left-1/2 -translate-x-1/2 top-[82px] w-[7px] h-[7px] rounded-full " + (a.k === "finder" || a.k === "msg" ? "bg-[#8c929b]" : "bg-[#c893ad]")} />}
          </div>
        );
      })}
    </div>
  );
}

function MenuBar() {
  const left: [string, string][] = [["File", "ml-[52px]"], ["Data", "ml-[52px]"], ["Worksheet", "ml-[53px]"], ["Dashboard", "ml-[54px]"], ["Story", "ml-[53px]"], ["Analysis", "ml-[52px]"], ["Map", "ml-[52px]"]];
  const right: [string, string][] = [["Format", ""], ["Server", "ml-[54px]"], ["Window", "ml-[52px]"], ["Help", "ml-[53px]"]];
  return (
    <div className="h-[68px] shrink-0 flex items-center text-[#f6f0ec] text-[25px] font-['Inter',sans-serif] bg-[linear-gradient(90deg,#4e3b2f_0%,#6b3e27_18%,#7f3d20_38%,#853d1f_52%,#6e2f22_75%,#4f2426_90%,#3c2029_100%)] [text-shadow:0_1px_3px_rgba(0,0,0,0.35)]">
      <svg width="30" height="36" viewBox="3 2 18 20" className="ml-[38px] shrink-0" fill="#f4f4f4"><path d={appleD} /></svg>
      <span className="ml-[39px] font-bold w-[100px] text-[25.5px]">Tableau</span>
      {left.map(([t, m]) => <span key={t} className={m + " whitespace-nowrap"}>{t}</span>)}
      <div className="flex-1" />
      {right.map(([t, m]) => <span key={t} className={m + " whitespace-nowrap"}>{t}</span>)}
      <svg width="52" height="26" viewBox="0 0 52 26" className="ml-[126px] shrink-0" fill="none"><rect x="1" y="2" width="44" height="22" rx="6" stroke="#d9cfca" strokeWidth="2" /><rect x="5" y="6" width="33" height="14" rx="3" fill="#f6f0ec" /><path d="M28 0L16 15H23L19 26L33 10H25Z" fill="#f6f0ec" stroke="#5a2a22" strokeWidth="1.5" /><path d="M48 9V17" stroke="#d9cfca" strokeWidth="2.5" /></svg>
      <svg width="35" height="26" viewBox="0 0 35 26" className="ml-[37px] shrink-0" fill="none" stroke="#f6f0ec" strokeWidth="3.5"><path d="M2 9C10 0 25 0 33 9M8 15C13 9 22 9 27 15" /><circle cx="17.5" cy="21" r="3" fill="#f6f0ec" stroke="none" /></svg>
      <svg width="26" height="28" viewBox="0 0 26 28" className="ml-[39px] shrink-0" fill="none" stroke="#f6f0ec" strokeWidth="3"><circle cx="11" cy="11" r="9" /><path d="M17 18L25 27" /></svg>
      <svg width="28" height="32" viewBox="0 0 28 32" className="ml-[40px] shrink-0"><rect x="1" y="1" width="26" height="14" rx="7" fill="none" stroke="#f6f0ec" strokeWidth="2" /><circle cx="20" cy="8" r="5" fill="#f6f0ec" /><rect x="0" y="17" width="28" height="15" rx="7.5" fill="#f6f0ec" /><circle cx="8" cy="24.5" r="5" fill="#6d3a30" /></svg>
      <span className="ml-[34px] mr-[32px] whitespace-nowrap tracking-[1.1px]">Tue 12 Dec&nbsp; 15:24</span>
    </div>
  );
}

export default function App() {
  return (
    <div className="w-[2704px] h-[1756px] overflow-hidden flex flex-col bg-[linear-gradient(90deg,#010d18_0%,#040812_22%,#1c0512_35%,#2c0a26_55%,#3a0c2a_70%,#4a1020_85%,#76301a_100%)]">
      <MenuBar />
      <div className="mt-[2px] h-[1556px] shrink-0 rounded-[20px] overflow-hidden flex flex-col bg-white">
        <div className="h-[58px] shrink-0 bg-[#f6f1ee] border-b-2 border-[#d4d0ce] flex items-center relative">
          <div className="ml-[16px] flex gap-[16px]">
            <div className="w-[24px] h-[24px] rounded-full bg-[#f0695f]" />
            <div className="w-[24px] h-[24px] rounded-full bg-[#f6be4f]" />
            <div className="w-[24px] h-[24px] rounded-full bg-[#62c655]" />
          </div>
          <div className="absolute inset-0 flex items-center justify-center text-[26.5px] font-bold text-[#4a4644] font-['Liberation_Sans',sans-serif]">Tableau - Book1</div>
        </div>
        <Toolbar />
        <div className="h-[1319px] shrink-0 flex">
          <LeftPanel />
          <Canvas />
          <div className="w-[255px] shrink-0 bg-[#f4f4f4] border-r-2 border-[#e4e4e4]" />
          <div className="flex-1 bg-[#fafafa] pt-[32px] flex justify-center">
            <div className="w-[16px] h-[1073px] rounded-full bg-[#7d7d7d]" />
          </div>
        </div>
        <Tabs />
        <StatusBar />
      </div>
      <Dock />
    </div>
  );
}
